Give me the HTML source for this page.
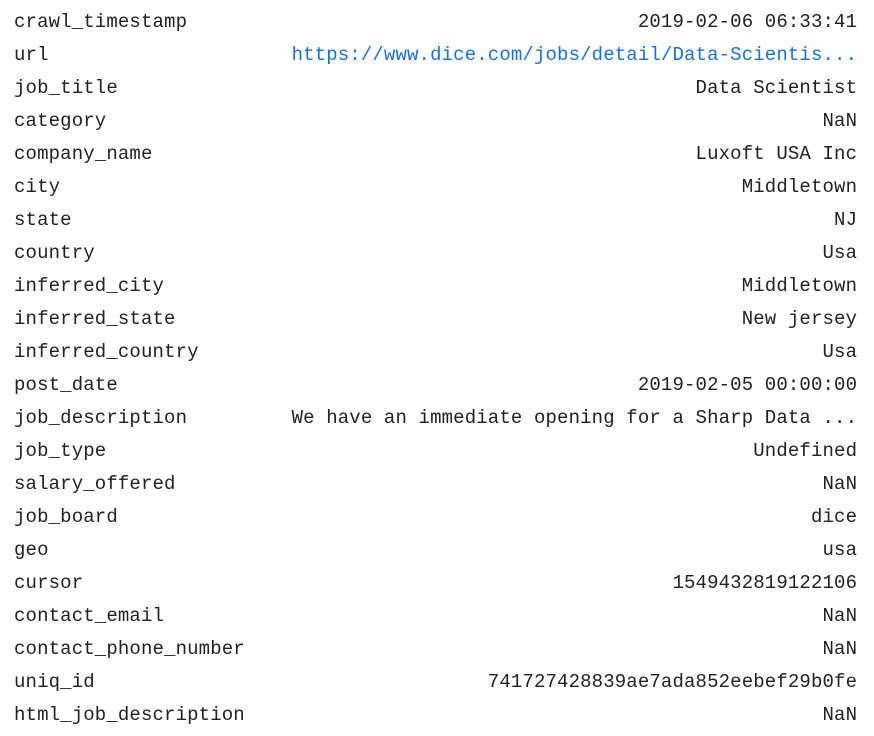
<!DOCTYPE html>
<html><head><style>
body{margin:0;background:#fff;width:874px;height:736px;overflow:hidden}
.r{position:absolute;left:14px;width:843px;height:33px;line-height:33px;font-family:"Liberation Mono",monospace;font-size:19px;letter-spacing:0.14px;color:#212121;white-space:pre;margin-top:2px}
.r span{position:absolute;right:-0.14px;top:0}
a{color:#1a6fd8;text-decoration:none}
</style></head><body>
<div class="r" style="top:4px">crawl_timestamp<span>2019-02-06 06:33:41</span></div>
<div class="r" style="top:37px">url<span><a>https://www.dice.com/jobs/detail/Data-Scientis...</a></span></div>
<div class="r" style="top:70px">job_title<span>Data Scientist</span></div>
<div class="r" style="top:103px">category<span>NaN</span></div>
<div class="r" style="top:136px">company_name<span>Luxoft USA Inc</span></div>
<div class="r" style="top:169px">city<span>Middletown</span></div>
<div class="r" style="top:202px">state<span>NJ</span></div>
<div class="r" style="top:235px">country<span>Usa</span></div>
<div class="r" style="top:268px">inferred_city<span>Middletown</span></div>
<div class="r" style="top:301px">inferred_state<span>New jersey</span></div>
<div class="r" style="top:334px">inferred_country<span>Usa</span></div>
<div class="r" style="top:367px">post_date<span>2019-02-05 00:00:00</span></div>
<div class="r" style="top:400px">job_description<span>We have an immediate opening for a Sharp Data ...</span></div>
<div class="r" style="top:433px">job_type<span>Undefined</span></div>
<div class="r" style="top:466px">salary_offered<span>NaN</span></div>
<div class="r" style="top:499px">job_board<span>dice</span></div>
<div class="r" style="top:532px">geo<span>usa</span></div>
<div class="r" style="top:565px">cursor<span>1549432819122106</span></div>
<div class="r" style="top:598px">contact_email<span>NaN</span></div>
<div class="r" style="top:631px">contact_phone_number<span>NaN</span></div>
<div class="r" style="top:664px">uniq_id<span>741727428839ae7ada852eebef29b0fe</span></div>
<div class="r" style="top:697px">html_job_description<span>NaN</span></div>
</body></html>
